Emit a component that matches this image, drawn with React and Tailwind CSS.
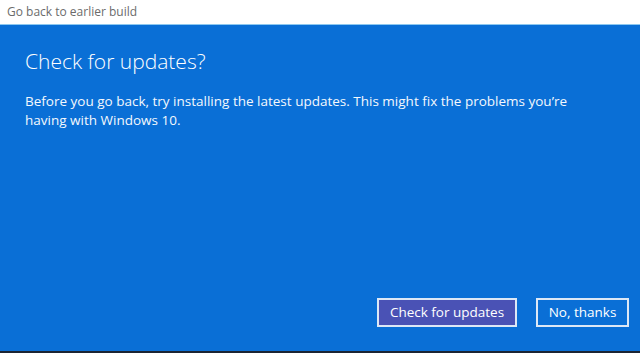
export default function App() {
  return (
    <div
      className="w-[640px] h-[353px] flex flex-col overflow-hidden"
      style={{ fontFamily: '"Open Sans", "Noto Sans", sans-serif' }}
    >
      <div className="h-[25px] bg-white border-b border-[#8cc8f0] flex items-center pl-[7px]">
        <span className="text-[12px] text-[#6b6b6b] leading-none">Go back to earlier build</span>
      </div>
      <div className="flex-1 bg-[#0a6fd6] flex flex-col px-[25px]">
        <h1 className="mt-[21px] text-[21px] leading-[30px] text-white font-light">Check for updates?</h1>
        <p className="mt-[16px] text-[13.5px] leading-[19px] text-[#f4f8fd] w-[560px]">
          Before you go back, try installing the latest updates. This might fix the problems you’re having with Windows 10.
        </p>
        <div className="mt-auto mb-[24px] flex justify-end gap-[19px] -mr-[14px]">
          <button className="h-[29px] w-[140px] bg-[#4a52b5] border-2 border-[#dde8f6] text-white text-[13.5px]">
            Check for updates
          </button>
          <button className="h-[29px] w-[93px] bg-[#0a6fd6] border-2 border-[#dde8f6] text-white text-[13.5px]">
            No, thanks
          </button>
        </div>
      </div>
      <div className="h-[2px] bg-[#1c2433]" />
    </div>
  );
}
